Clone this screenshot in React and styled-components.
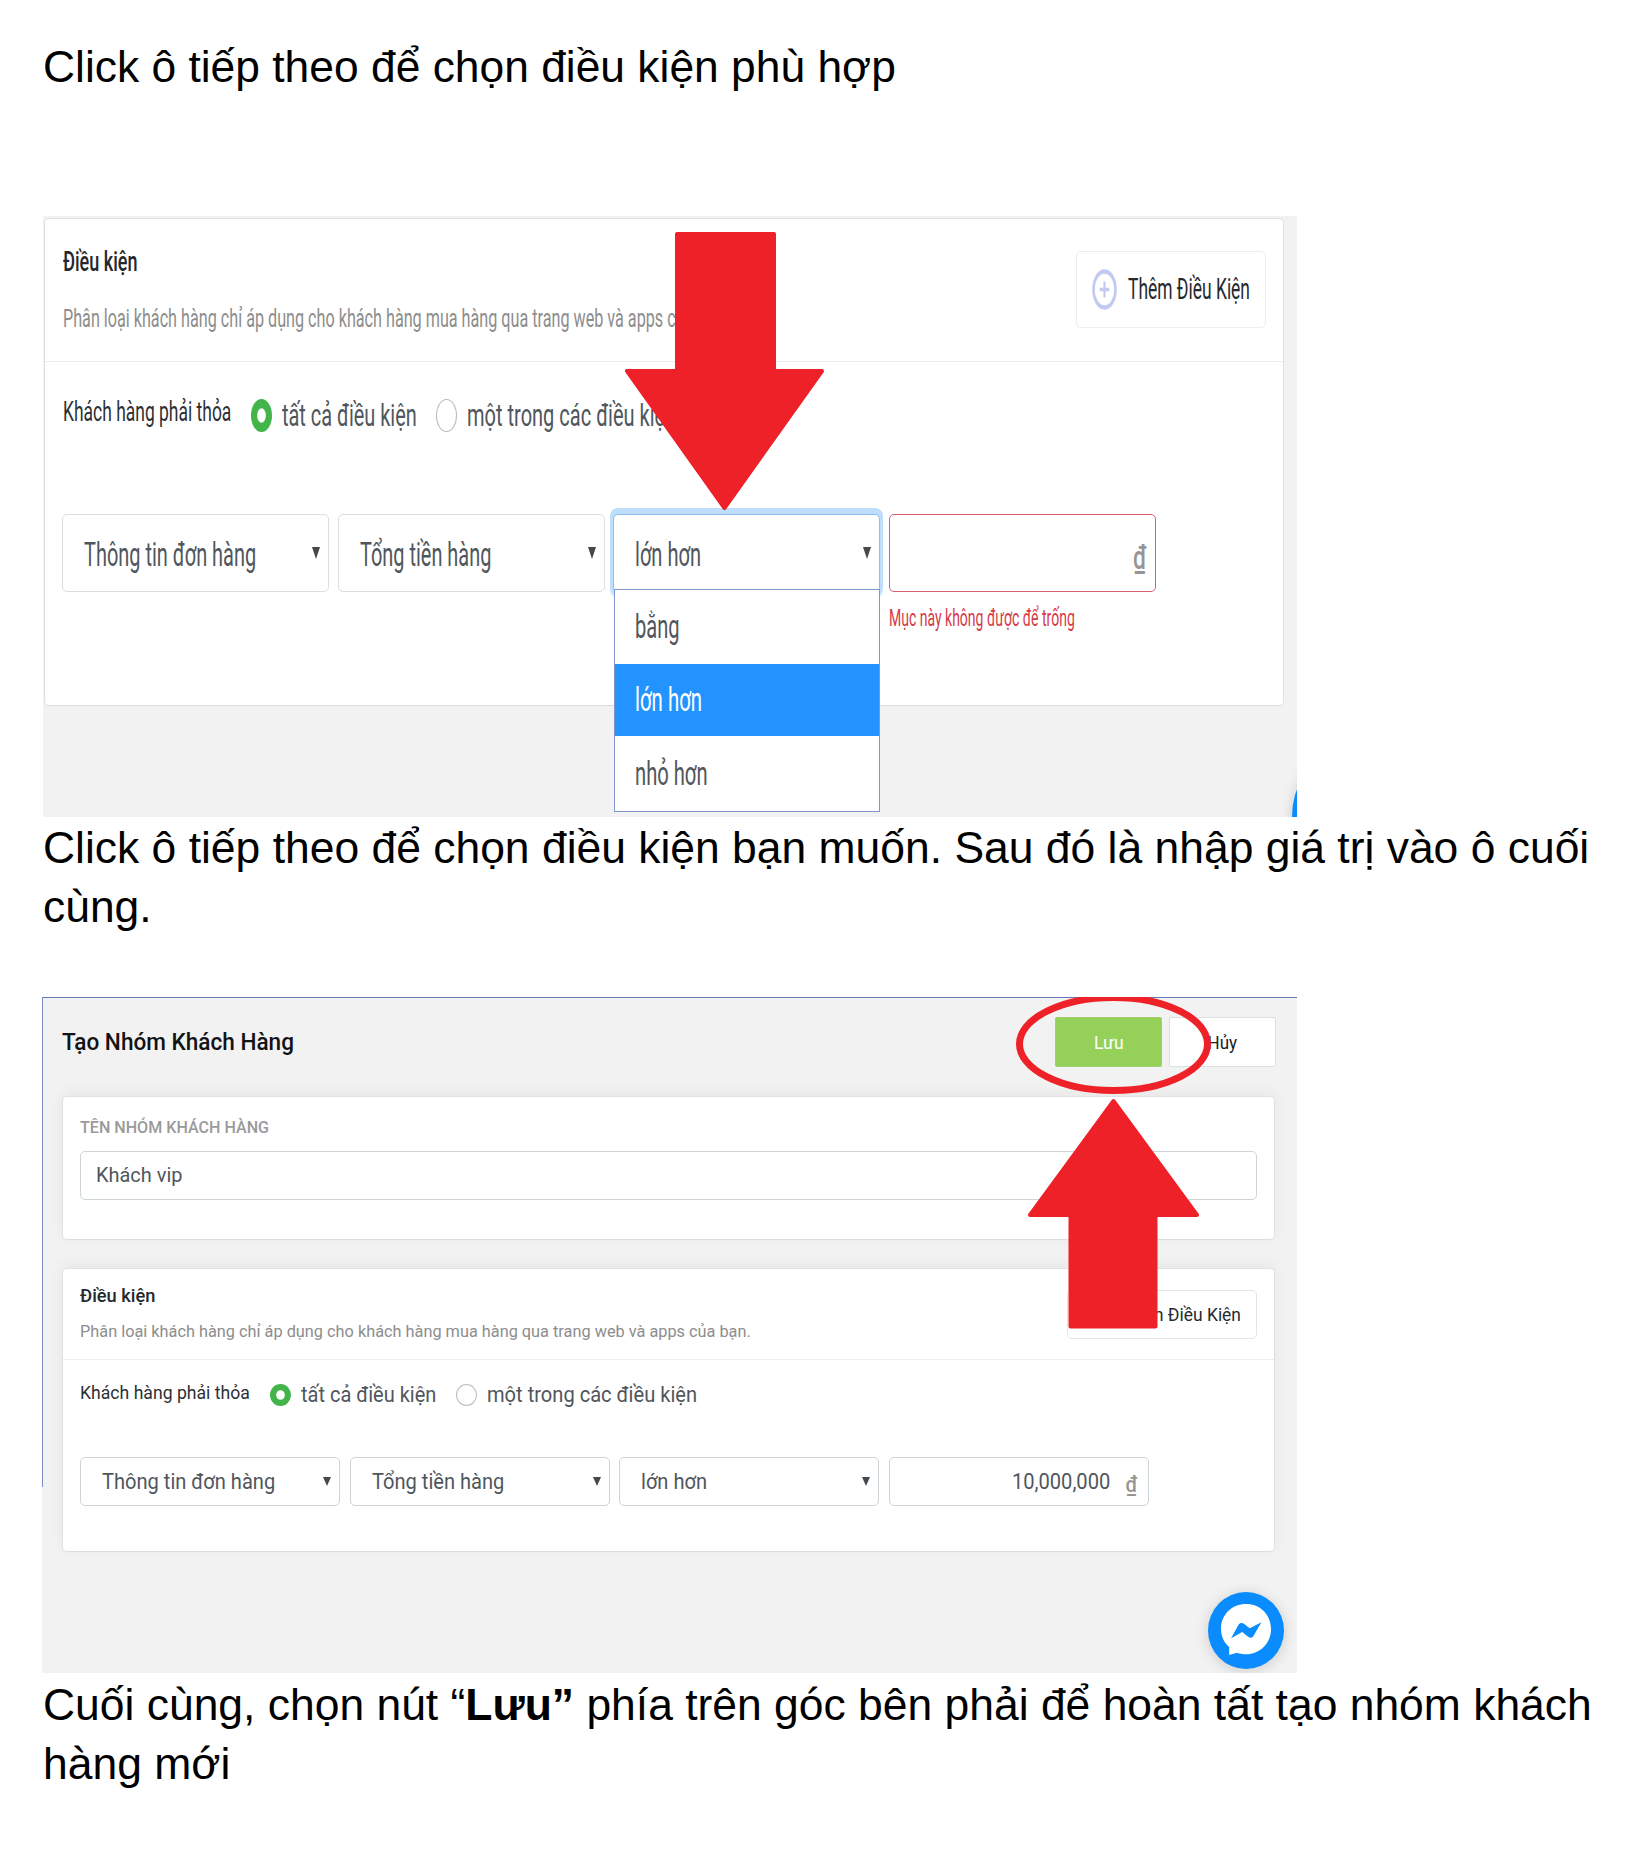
import React, { useLayoutEffect, useRef, useState } from "react";
import styled, { createGlobalStyle, css } from "styled-components";

const Global = createGlobalStyle`
  * { box-sizing: border-box; }
  body { margin: 0; background: #fff; }
`;

const Page = styled.main`
  width: 1633px;
  height: 1849px;
  padding: 37px 0 0 43px;
  overflow: hidden;
  background: #fff;
  font-family: Roboto, "Liberation Sans", sans-serif;
`;

const Paragraph = styled.p`
  display: flex;
  flex-direction: column;
  margin: ${(p) => p.$gap || 0}px 0 0;
  color: #000;
  font-family: "Liberation Sans", Arial, sans-serif;
`;

const Measure = styled.span`
  display: block;
  flex: none;
  width: ${(p) => p.$width}px;
  height: ${(p) => p.$line}px;
  line-height: ${(p) => p.$line}px;
  font-size: ${(p) => p.$size}px;
  font-weight: ${(p) => p.$weight};
  color: ${(p) => p.$color};
  white-space: nowrap;
`;

const Run = styled.span`
  display: inline-block;
  transform-origin: 0 50%;
`;

/* One line of text set to a given measure, with an optional vertical stretch. */
function Line({ width, size, line = 24, weight = 400, color = "inherit", stretch = 1, children }) {
  const ref = useRef(null);
  const [ratio, setRatio] = useState(1);
  useLayoutEffect(() => {
    setRatio(width / ref.current.offsetWidth);
  }, [width, size, weight]);
  return (
    <Measure $width={width} $line={line} $size={size} $weight={weight} $color={color}>
      <Run ref={ref} style={{ transform: `scale(${ratio}, ${stretch})` }}>{children}</Run>
    </Measure>
  );
}

const Figure = styled.figure`
  position: relative;
  width: ${(p) => p.$width}px;
  height: ${(p) => p.$height}px;
  margin: ${(p) => p.$gap}px 0 0 ${(p) => 1254 - p.$width}px;
  padding: ${(p) => p.$pad};
  overflow: hidden;
  background: #f2f2f2;
`;

const EdgeTop = styled.div`
  position: absolute;
  inset: 0 0 auto 0;
  height: 1px;
  background: #6478b4;
`;

const EdgeLeft = styled.div`
  position: absolute;
  left: 0;
  top: 0;
  width: 1px;
  height: 490px;
  background: #7d8ac6;
`;

const Card = styled.section`
  width: ${(p) => p.$width}px;
  height: ${(p) => p.$height}px;
  margin-top: ${(p) => p.$gap || 0}px;
  border: 1px solid #e0e1e3;
  border-bottom-color: #dcdddf;
  border-radius: 5px;
  background: #fff;
  box-shadow: ${(p) => p.$shadow || "none"};
`;

const CardHeader = styled.header`
  display: flex;
  justify-content: space-between;
  align-items: flex-start;
  height: ${(p) => p.$height}px;
  padding: 0 17px 0 ${(p) => p.$left || 17}px;
  border-bottom: 1px solid #e9edf0;
`;

const Heading = styled.div`
  display: flex;
  flex-direction: column;
  gap: ${(p) => p.$gap}px;
  padding-top: ${(p) => p.$top}px;
`;

const AddButton = styled.div`
  display: flex;
  align-items: center;
  width: 190px;
  height: ${(p) => p.$height}px;
  margin-top: ${(p) => p.$top}px;
  padding: 0 15px;
  gap: 11px;
  border: 1px solid ${(p) => p.$edge};
  border-radius: 5px;
  background: #fff;
`;

const CardBody = styled.div`
  padding: ${(p) => p.$top}px 17px 0;
`;

const Choices = styled.div`
  display: flex;
  align-items: center;
  height: 40px;
  padding-left: ${(p) => p.$left || 0}px;
`;

const ChoiceCaption = styled.div`
  padding-bottom: ${(p) => p.$lift}px;
  margin-right: 20px;
`;

const Choice = styled.div`
  display: flex;
  align-items: center;
  gap: 10px;
  margin-right: ${(p) => p.$after || 20}px;
`;

const Radio = styled.span`
  flex: none;
  width: 21px;
  height: ${(p) => p.$height}px;
  border-radius: 50%;
  border: 1.5px solid #b9bcbf;
  background: #fff;
  ${(p) => p.$on && css`
    border: 0;
    background: radial-gradient(ellipse 20% 21% at center, #fff 90%, #41b549 115%);
  `}
`;

const Fields = styled.div`
  display: flex;
  gap: ${(p) => p.$gap}px;
  margin-top: ${(p) => p.$top}px;
`;

const Cell = styled.div`
  position: relative;
  flex: none;
  width: ${(p) => p.$width}px;
`;

const Box = styled.div`
  display: flex;
  align-items: center;
  justify-content: ${(p) => p.$justify || "space-between"};
  width: 100%;
  height: ${(p) => p.$height}px;
  padding: ${(p) => p.$pad || "0 8px 0 21px"};
  border: ${(p) => p.$border || "1px solid #dcdfe2"};
  border-radius: 5px;
  background: #fff;
  box-shadow: ${(p) => p.$ring || "none"};
`;

const Nudge = styled.div`
  padding-top: ${(p) => p.$down}px;
`;

const Caret = styled.i`
  width: 0;
  height: 0;
  border: solid transparent;
  border-width: ${(p) => p.$height}px 4px 0;
  border-top-color: #45494d;
`;

const Menu = styled.div`
  position: absolute;
  z-index: 2;
  left: 1px;
  top: 75px;
  width: 266px;
  border: 1px solid #7f97cf;
  background: #fff;
`;

const Option = styled.div`
  display: flex;
  align-items: center;
  height: ${(p) => p.$height}px;
  padding-left: 20px;
  color: ${(p) => (p.$active ? "#fff" : "#50565c")};
  background: ${(p) => (p.$active ? "#2394ff" : "#fff")};
`;

const Toolbar = styled.div`
  display: flex;
  align-items: center;
  height: 50px;
  padding-right: 21px;
  gap: 7px;
`;

const ToolbarTitle = styled.div`
  flex: 1;
  padding-top: 2px;
`;

const ToolbarButton = styled.div`
  display: flex;
  align-items: center;
  justify-content: center;
  width: 107px;
  height: 50px;
  padding-top: 1px;
  border: 1px solid ${(p) => (p.$primary ? "#a0cf72" : "#dedfe0")};
  border-radius: 2px;
  color: ${(p) => (p.$primary ? "#fff" : "#1b1b1f")};
  background: ${(p) => (p.$primary ? "#95d159" : "#fff")};
`;

const FieldGroup = styled.div`
  display: flex;
  flex-direction: column;
  gap: 11px;
  padding: 19px 17px 0 17px;
`;

const Overlay = styled.svg`
  position: absolute;
  z-index: 3;
  left: ${(p) => p.$x}px;
  top: ${(p) => p.$y}px;
  overflow: visible;
`;

const Badge = styled.div`
  position: absolute;
  left: ${(p) => p.$x}px;
  top: ${(p) => p.$y}px;
  width: 76px;
  height: ${(p) => p.$height}px;
  border-radius: 50%;
  background: #0a8cff;
  box-shadow: 0 2px 14px rgba(0, 0, 0, 0.16);
`;

const CurrencyGap = styled.div`
  margin-left: 16px;
`;

const Plus = ({ height }) => (
  <svg width="26" height={height} viewBox="0 0 26 26" preserveAspectRatio="none" fill="none" stroke="#c2caf1">
    <circle cx="13" cy="13" r="11.4" strokeWidth="2.8" />
    <path d="M13 8v10M8 13h10" strokeWidth="2.2" />
  </svg>
);

function Select({ width, height, text, textWidth, stretch, caret, down, border, ring, children }) {
  return (
    <Cell $width={width}>
      <Box $height={height} $border={border} $ring={ring}>
        <Nudge $down={down}>
          <Line width={textWidth} size={21} color="#50565c" stretch={stretch}>{text}</Line>
        </Nudge>
        <Caret $height={caret} />
      </Box>
      {children}
    </Cell>
  );
}

function ConditionPicker() {
  const k = 1.54;
  const option = { size: 21, stretch: k };
  return (
    <Figure $width={1254} $height={601} $gap={120} $pad="2px 0 0 1px">
      <Card $width={1240} $height={488}>
        <CardHeader $height={143} $left={18}>
          <Heading $top={31} $gap={33}>
            <Line width={74} size={18.5} weight={500} color="#24282c" stretch={k}>Điều kiện</Line>
            <Line width={665} size={16.4} color="#8d8d8d" stretch={k}>Phân loại khách hàng chỉ áp dụng cho khách hàng mua hàng qua trang web và apps của bạn.</Line>
          </Heading>
          <AddButton $top={32} $height={77} $edge="#ebecee">
            <Plus height={41} />
            <Line width={122} size={19} color="#26292d" stretch={k}>Thêm Điều Kiện</Line>
          </AddButton>
        </CardHeader>
        <CardBody $top={33}>
          <Choices $left={1}>
            <ChoiceCaption $lift={6}>
              <Line width={168} size={18.5} color="#2c3034" stretch={k}>Khách hàng phải thỏa</Line>
            </ChoiceCaption>
            <Choice $after={19}>
              <Radio $on $height={33} />
              <Line width={135} size={20.5} color="#50565c" stretch={k}>tất cả điều kiện</Line>
            </Choice>
            <Choice>
              <Radio $height={33} />
              <Line width={209} size={20.5} color="#50565c" stretch={k}>một trong các điều kiện</Line>
            </Choice>
          </Choices>
          <Fields $top={79} $gap={8.7}>
            <Select width={267} height={78} text="Thông tin đơn hàng" textWidth={172} stretch={k} caret={12} down={4} />
            <Select width={267} height={78} text="Tổng tiền hàng" textWidth={131} stretch={k} caret={12} down={4} />
            <Select
              width={267} height={78} text="lớn hơn" textWidth={66} stretch={k} caret={12} down={4}
              border="1px solid #8dbdf2" ring="0 0 0 3px #bfdefc, 0 -3px 0 3px #bfdefc, 0 3px 0 3px #cfe6fd"
            >
              <Menu>
                <Option $height={74}><Line width={45} {...option}>bằng</Line></Option>
                <Option $height={72} $active><Line width={67} {...option}>lớn hơn</Line></Option>
                <Option $height={75}><Line width={73} {...option}>nhỏ hơn</Line></Option>
              </Menu>
            </Select>
            <Cell $width={267}>
              <Box $height={78} $justify="flex-end" $pad="9px 9px 0 0" $border="1px solid #d9606c">
                <Line width={13} size={21} weight={500} color="#959595" stretch={k}>₫</Line>
              </Box>
              <Nudge $down={14}>
                <Line width={186} size={15.5} color="#d63a49" stretch={k}>Mục này không được để trống</Line>
              </Nudge>
            </Cell>
          </Fields>
        </CardBody>
      </Card>
      <Badge $x={1249} $y={545} $height={112} />
      <Overlay $x={582} $y={15} width="200" height="279" fill="#ee2129" stroke="#ee2129" strokeWidth="4" strokeLinejoin="round">
        <path d="M52 3H149V140H197L99.500 277L2 140H52Z" />
      </Overlay>
    </Figure>
  );
}

function CreateGroup() {
  const k = 1.07;
  const shadow = "0 -3px 14px rgba(0, 0, 0, 0.05)";
  const edge = "1px solid #cdd4da";
  return (
    <Figure $width={1255} $height={676} $gap={61} $pad="20px 0 0 20px">
      <EdgeTop />
      <EdgeLeft />
      <Toolbar>
        <ToolbarTitle>
          <Line width={232} size={21.5} weight={500} color="#111315" stretch={k}>Tạo Nhóm Khách Hàng</Line>
        </ToolbarTitle>
        <ToolbarButton $primary><Line width={30} size={17} stretch={k}>Lưu</Line></ToolbarButton>
        <ToolbarButton><Line width={30} size={17} stretch={k}>Hủy</Line></ToolbarButton>
      </Toolbar>
      <Card $width={1213} $height={144} $gap={29} $shadow={shadow}>
        <FieldGroup>
          <Line width={189} size={16} weight={500} color="#9a9a9a" stretch={k}>TÊN NHÓM KHÁCH HÀNG</Line>
          <Box $height={49} $pad="0 15px" $border={edge}>
            <Line width={87} size={19.5} color="#50565c" stretch={k}>Khách vip</Line>
          </Box>
        </FieldGroup>
      </Card>
      <Card $width={1213} $height={284} $gap={28} $shadow={shadow}>
        <CardHeader $height={91}>
          <Heading $top={15} $gap={12}>
            <Line width={75} size={18} weight={500} color="#24282c" stretch={k}>Điều kiện</Line>
            <Line width={671} size={15.5} color="#8d8d8d" stretch={k}>Phân loại khách hàng chỉ áp dụng cho khách hàng mua hàng qua trang web và apps của bạn.</Line>
          </Heading>
          <AddButton $top={21} $height={49} $edge="#e3e5ed">
            <Plus height={27} />
            <Line width={122} size={18} color="#26292d" stretch={k}>Thêm Điều Kiện</Line>
          </AddButton>
        </CardHeader>
        <CardBody $top={15}>
          <Choices>
            <ChoiceCaption $lift={4}>
              <Line width={170} size={17} color="#2c3034" stretch={k}>Khách hàng phải thỏa</Line>
            </ChoiceCaption>
            <Choice>
              <Radio $on $height={22} />
              <Line width={135} size={20} color="#50565c" stretch={k}>tất cả điều kiện</Line>
            </Choice>
            <Choice>
              <Radio $height={22} />
              <Line width={210} size={20} color="#50565c" stretch={k}>một trong các điều kiện</Line>
            </Choice>
          </Choices>
          <Fields $top={42} $gap={9.5}>
            <Select width={260} height={49} text="Thông tin đơn hàng" textWidth={173} stretch={k} caret={9} down={1} border={edge} />
            <Select width={260} height={49} text="Tổng tiền hàng" textWidth={132} stretch={k} caret={9} down={1} border={edge} />
            <Select width={260} height={49} text="lớn hơn" textWidth={66} stretch={k} caret={9} down={1} border={edge} />
            <Cell $width={260}>
              <Box $height={49} $justify="flex-end" $pad="0 10px 0 0" $border={edge}>
                <Nudge $down={1}>
                  <Line width={98} size={20.5} color="#50565c" stretch={k}>10,000,000</Line>
                </Nudge>
                <Nudge $down={7}>
                  <CurrencyGap>
                    <Line width={12} size={20} weight={500} color="#959595" stretch={k}>₫</Line>
                  </CurrencyGap>
                </Nudge>
              </Box>
            </Cell>
          </Fields>
        </CardBody>
      </Card>
      <Badge $x={1166} $y={595} $height={77} />
      <Overlay $x={1179} $y={607} width="50" height="51" viewBox="0 0 52 52" preserveAspectRatio="none">
        <path d="M26 0C11.500 0 0 10.700 0 25.200C0 33 3.300 39.500 8.500 43.800V52L16.500 49.700C19.500 50.700 22.700 51.200 26 51.200C40.500 51.200 52 40 52 25.400C52 10.700 40.500 0 26 0Z" fill="#fff" />
        <path d="M10.500 35L18.200 21.200C19.400 19.300 22 18.800 23.800 20.200L29.900 24.700L42 18.500L33.800 32.500C32.600 34.400 30 34.900 28.200 33.500L22.100 28.500Z" fill="#0a8cff" />
      </Overlay>
      <Overlay $x={974} $y={-3} width="196" height="100" fill="none" stroke="#ee2129" strokeWidth="7">
        <ellipse cx="97.500" cy="50" rx="94" ry="46.500" />
      </Overlay>
      <Overlay $x={985.5} $y={102} width="171" height="230" fill="#ee2129" stroke="#ee2129" strokeWidth="4" strokeLinejoin="round">
        <path d="M85.500 2L169 116H127.500V227.500H42.500V116H2Z" />
      </Overlay>
    </Figure>
  );
}

const textProps = { size: 44, line: 59 };

export default function App() {
  return (
    <Page>
      <Global />
      <Paragraph>
        <Line width={853} {...textProps}>Click ô tiếp theo để chọn điều kiện phù hợp</Line>
      </Paragraph>
      <ConditionPicker />
      <Paragraph $gap={1}>
        <Line width={1546} {...textProps}>Click ô tiếp theo để chọn điều kiện bạn muốn. Sau đó là nhập giá trị vào ô cuối</Line>
        <Line width={109} {...textProps}>cùng.</Line>
      </Paragraph>
      <CreateGroup />
      <Paragraph $gap={2}>
        <Line width={1549} {...textProps}>Cuối cùng, chọn nút “<b>Lưu”</b> phía trên góc bên phải để hoàn tất tạo nhóm khách</Line>
        <Line width={187} {...textProps}>hàng mới</Line>
      </Paragraph>
    </Page>
  );
}
